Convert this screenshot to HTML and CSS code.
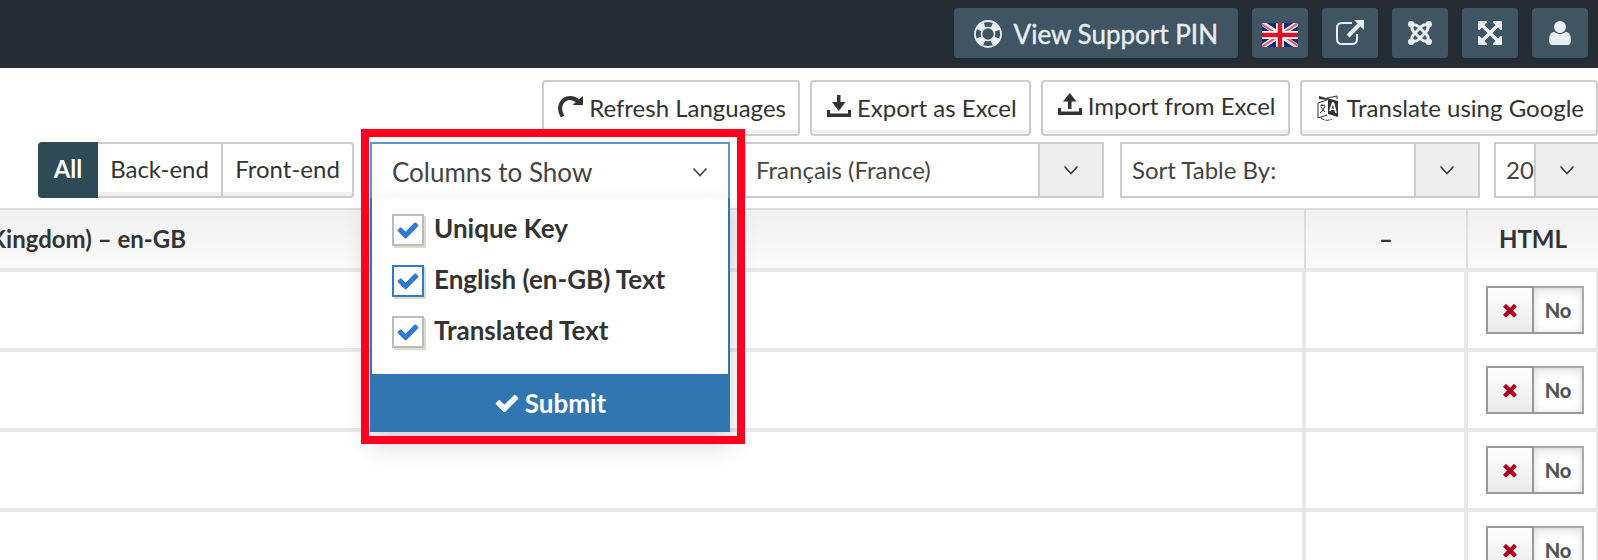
FILE: index.html
```html
<!DOCTYPE html>
<html lang="en">
<head>
<meta charset="utf-8">
<title>Language Manager</title>
<link rel="stylesheet" href="styles.css">
</head>
<body>
<svg class="sprite" aria-hidden="true">
  <symbol id="check" viewBox="0 0 1792 1792"><path d="M1671 566q0 40-28 68l-724 724-136 136q-28 28-68 28t-68-28l-136-136-362-362q-28-28-28-68t28-68l136-136q28-28 68-28t68 28l294 295 656-657q28-28 68-28t68 28l136 136q28 28 28 68z"/></symbol>
  <symbol id="times" viewBox="0 0 1792 1792"><path d="M1490 1322q0 40-28 68l-136 136q-28 28-68 28t-68-28l-294-294-294 294q-28 28-68 28t-68-28l-136-136q-28-28-28-68t28-68l294-294-294-294q-28-28-28-68t28-68l136-136q28-28 68-28t68 28l294 294 294-294q28-28 68-28t68 28l136 136q28 28 28 68t-28 68l-294 294 294 294q28 28 28 68z"/></symbol>
  <symbol id="chevron" viewBox="0 0 16 16"><path d="M1.500 4.500L8 11.500L14.500 4.500" fill="none" stroke="#444" stroke-width="1.800"/></symbol>
</svg>

<header class="topbar">
  <button class="top-btn top-btn-wide">
    <svg width="28" height="28" viewBox="0 0 28 28"><circle cx="14" cy="14" r="13" fill="none" stroke="currentColor" stroke-width="1.800"/><circle cx="14" cy="14" r="9.500" fill="none" stroke="currentColor" stroke-width="6" stroke-dasharray="7.500 7.423" stroke-dashoffset="-3.700"/><circle cx="14" cy="14" r="6.500" fill="none" stroke="currentColor" stroke-width="1.600"/></svg>
    <span>View Support PIN</span>
  </button>
  <button class="top-btn" aria-label="Language">
    <svg class="flag" width="36" height="24" viewBox="0 0 36 24"><path fill="#0b2a7b" d="M0 0h36v24H0z"/><path d="M0 0L36 24M36 0L0 24" stroke="#f3e6ee" stroke-width="5"/><path d="M0 1L16 12M36 0L20 11M0 24L16 13M36 23L20 12" stroke="#e0566a" stroke-width="2"/><path d="M18 0V24M0 12H36" stroke="#fff" stroke-width="8"/><path d="M18 0V24M0 12H36" stroke="#d8142c" stroke-width="4.600"/></svg>
  </button>
  <button class="top-btn" aria-label="Open site">
    <svg width="28" height="28" viewBox="0 0 28 28"><path d="M16 4H6Q1 4 1 9V20Q1 25 6 25H16Q21 25 21 20V15" fill="none" stroke="currentColor" stroke-width="2"/><path d="M12 17L23 6" stroke="currentColor" stroke-width="4"/><path d="M18 1h10v10z" fill="currentColor"/></svg>
  </button>
  <button class="top-btn" aria-label="Joomla">
    <svg width="24" height="24" viewBox="0 0 24 24" fill="none" stroke="currentColor" stroke-width="3"><g id="arm"><circle cx="3.200" cy="3.200" r="3.200" fill="currentColor" stroke="none"/><path d="M4 4.200Q8 3 11 6L17.500 12.500M4.200 4Q3 8 5.500 10.500L6.500 12"/></g><use href="#arm" transform="rotate(90 12 12)"/><use href="#arm" transform="rotate(180 12 12)"/><use href="#arm" transform="rotate(270 12 12)"/></svg>
  </button>
  <button class="top-btn" aria-label="Full screen">
    <svg width="24" height="24" viewBox="128 128 1536 1536" fill="currentColor"><path d="M1411 541l-355 355 355 355 144-144q29-31 70-14 39 17 39 59v448q0 26-19 45t-45 19h-448q-42 0-59-40-17-39 14-69l144-144-355-355-355 355 144 144q31 30 14 69-17 40-59 40h-448q-26 0-45-19t-19-45v-448q0-42 40-59 39-17 69 14l144 144 355-355-355-355-144 144q-19 19-45 19-12 0-24-5-40-17-40-59v-448q0-26 19-45t45-19h448q42 0 59 40 17 39-14 69l-144 144 355 355 355-355-144-144q-31-30-14-69 17-40 59-40h448q26 0 45 19t19 45v448q0 42-39 59-13 5-25 5-26 0-45-19z"/></svg>
  </button>
  <button class="top-btn" aria-label="Account">
    <svg width="24" height="24" viewBox="128 128 1536 1536" fill="currentColor"><path d="M1600 1399q0 109-62.500 187t-150.500 78h-982q-88 0-150.500-78t-62.500-187q0-85 8.500-160.500t31.500-152 58.500-131 94-89 134.500-34.500q195 128 377 128t377-128q76 0 134.500 34.500t94 89 58.500 131 31.500 152 8.500 160.500zm-320-887q0 159-112.500 271.500t-271.500 112.500-271.500-112.500-112.500-271.500 112.500-271.500 271.500-112.500 271.500 112.500 112.500 271.500z"/></svg>
  </button>
</header>

<main>
  <div class="actions">
    <button class="btn"><svg width="26" height="24" viewBox="0 0 26 24"><path d="M4.500 22.500C-1 13 4 4 12 4Q17 4 20 7.500" fill="none" stroke="currentColor" stroke-width="4"/><path d="M25 2V11H14.500Z" fill="currentColor"/></svg>Refresh Languages</button>
    <button class="btn"><svg width="26" height="24" viewBox="0 0 26 24" fill="currentColor"><path d="M11 1h3.500v7H19.500l-6.750 9L6 8H11zM1 16h3v3.500h18v-3.500h3v7H1z"/></svg>Export as Excel</button>
    <button class="btn btn-raised"><svg width="26" height="24" viewBox="0 0 26 24" fill="currentColor"><path d="M11 17V9.500H6l6.750-8.500L19.500 9.500h-5v7.500zM1 16h3v3.500h18v-3.500h3v7H1z"/></svg>Import from Excel</button>
    <button class="btn btn-translate"><svg width="22" height="26" viewBox="0 0 22 26" fill="none" stroke="currentColor"><path d="M10 3L20 1V4M10 5L1 8V23L10 20"/><path d="M2 1L21 6V22L11 19V5L2 4Z" fill="currentColor" stroke="none"/><path d="M3 11l5-1M5 9v2M8 11Q7 15 3 18M4 12l4 5" stroke-width="1"/><path d="M13 16l2.500-8h1l2.500 10M14 14l4 .5" stroke="#fff" stroke-width="1.700"/><path d="M4 23Q9 27 15 24" stroke-dasharray="4 1"/></svg>Translate using Google</button>
  </div>

  <div class="filters">
    <div class="group">
      <button class="seg seg-active">All</button><button class="seg">Back-end</button><button class="seg">Front-end</button>
    </div>
    <div class="columns">
      <div class="overlay">
        <button class="columns-toggle" aria-expanded="true"><span>Columns to Show</span><svg width="16" height="16"><use href="#chevron"/></svg></button>
        <form class="panel">
          <div class="options">
            <label class="option"><input type="checkbox" checked><svg width="24" height="24"><use href="#check"/></svg><span>Unique Key</span></label>
            <label class="option option-focus"><input type="checkbox" checked><svg width="24" height="24"><use href="#check"/></svg><span>English (en-GB) Text</span></label>
            <label class="option"><input type="checkbox" checked><svg width="24" height="24"><use href="#check"/></svg><span>Translated Text</span></label>
          </div>
          <button type="button" class="submit"><svg width="26" height="26"><use href="#check"/></svg>Submit</button>
        </form>
      </div>
    </div>
    <div class="select">
      <select aria-label="Language"><option>Français (France)</option></select>
      <span class="arrow"><svg width="16" height="16"><use href="#chevron"/></svg></span>
    </div>
    <div class="select select-sort">
      <select aria-label="Sort table"><option>Sort Table By:</option></select>
      <span class="arrow"><svg width="16" height="16"><use href="#chevron"/></svg></span>
    </div>
    <div class="select select-limit">
      <select aria-label="Rows per page"><option>20</option></select>
      <span class="arrow"><svg width="16" height="16"><use href="#chevron"/></svg></span>
    </div>
  </div>

  <table class="grid">
    <colgroup><col><col class="col-dash"><col class="col-html"></colgroup>
    <thead><tr><th class="source"><span>Kingdom) – en-GB</span></th><th>–</th><th>HTML</th></tr></thead>
    <tbody>
      <tr><td></td><td></td><td><button class="switch"><span class="knob"><svg width="20" height="20"><use href="#times"/></svg></span><span class="state">No</span></button></td></tr>
      <tr><td></td><td></td><td><button class="switch"><span class="knob"><svg width="20" height="20"><use href="#times"/></svg></span><span class="state">No</span></button></td></tr>
      <tr><td></td><td></td><td><button class="switch"><span class="knob"><svg width="20" height="20"><use href="#times"/></svg></span><span class="state">No</span></button></td></tr>
      <tr><td></td><td></td><td><button class="switch"><span class="knob"><svg width="20" height="20"><use href="#times"/></svg></span><span class="state">No</span></button></td></tr>
    </tbody>
  </table>
</main>
</body>
</html>
```
FILE: styles.css
```css
* { box-sizing: border-box; }
html { overflow: hidden; }
body {
  margin: 0;
  background: #fff;
  color: #333;
  font: 24px/32px Lato, "Liberation Sans", sans-serif;
}
button, select, input { font: inherit; color: inherit; margin: 0; }
button { padding: 0; border: 0; background: none; white-space: nowrap; }
svg { flex: none; }
.sprite { position: absolute; width: 0; height: 0; }

.topbar {
  display: flex;
  justify-content: flex-end;
  gap: 14px;
  padding: 8px 10px 10px;
  background: #252c34;
}
.top-btn {
  display: flex;
  align-items: center;
  justify-content: center;
  width: 56px;
  height: 50px;
  border-radius: 4px;
  background: #3f5563;
  color: #e8eef3;
}
.top-btn-wide {
  width: auto;
  gap: 12px;
  padding: 2px 20px 0;
  font-size: 26px;
  -webkit-text-stroke: 0.4px currentColor;
}
.flag { margin-top: 4px; }

.actions {
  display: flex;
  justify-content: flex-end;
  gap: 10px;
  padding: 12px 0 6px;
}
.btn {
  display: flex;
  align-items: center;
  gap: 5px;
  height: 56px;
  padding: 0 12px 0 14px;
  border: 2px solid #ccc;
  border-radius: 4px;
  background: #fff;
  box-shadow: inset 0 -4px #f0f0f0;
}
.btn svg { margin-bottom: 4px; }
.btn-raised { padding-bottom: 4px; }
.btn-translate { gap: 8px; padding-left: 15px; }
.btn-translate svg { margin: 0; }

.filters { display: flex; height: 56px; padding-left: 38px; }
.group { display: flex; flex: none; width: 316px; margin-right: 16px; }
.seg {
  flex: 1 1 auto;
  padding-bottom: 2px;
  border: solid #ccc;
  border-width: 2px 2px 2px 0;
  background: #fff;
  box-shadow: inset 0 -4px #f0f0f0;
}
.seg:last-child { border-radius: 0 4px 4px 0; }
.seg-active {
  flex: none;
  width: 60px;
  border: 0;
  border-radius: 4px 0 0 4px;
  background: #2e4a56;
  box-shadow: none;
  color: #fff;
  font-weight: 700;
}

.columns { position: relative; flex: none; width: 360px; margin-right: 14px; }
.overlay { position: absolute; z-index: 2; top: 0; left: 0; width: 100%; }
.overlay::after {
  content: "";
  position: absolute;
  inset: -13px -15px -12px -9px;
  border: 8px solid #ff0020;
  pointer-events: none;
}
.columns-toggle {
  display: flex;
  align-items: center;
  justify-content: space-between;
  width: 100%;
  height: 56px;
  padding: 2px 20px 0;
  border: 2px solid #5b97d0;
  border-bottom: 0;
  background: #fff;
  color: #444;
  font-size: 26px;
}
.panel {
  background: #fff;
  box-shadow: 0 12px 24px rgba(0, 0, 0, .18);
}
.options {
  display: flex;
  flex-direction: column;
  gap: 19px;
  padding: 16px 20px 26px;
  border: solid #3176b1;
  border-width: 0 2px;
}
.option { position: relative; display: flex; gap: 10px; font-size: 26px; line-height: 28px; font-weight: 700; }
.option input {
  appearance: none;
  width: 32px;
  height: 32px;
  border: 2px solid #bbb;
  background: #fff;
  box-shadow: 2px 2px #dcdccb;
}
.option-focus input { border-color: #2f7bd0; }
.option svg { position: absolute; top: 4px; left: 4px; fill: #2f7bd0; }
.submit {
  display: flex;
  align-items: center;
  justify-content: center;
  gap: 5px;
  width: 100%;
  height: 58px;
  background: #3176b1;
  color: #fff;
  font-size: 26px;
  font-weight: 700;
}
.submit svg { fill: currentColor; }

.select { position: relative; flex: none; width: 360px; margin-right: 16px; }
.select select {
  appearance: none;
  width: 100%;
  height: 56px;
  padding: 0 0 0 10px;
  border: 2px solid #ccc;
  border-radius: 0;
  background: #fff;
  color: #444;
}
.arrow {
  position: absolute;
  inset: 2px 2px 2px auto;
  display: flex;
  align-items: center;
  justify-content: center;
  width: 64px;
  border-left: 2px solid #ccc;
  background: #eee;
  pointer-events: none;
}
.select-sort { margin-right: 14px; }
.select-limit { flex: 1; margin: 0; }
.select-limit select { border-right: 0; }
.select-limit .arrow { right: 0; }

.grid {
  width: 100%;
  margin-top: 10px;
  border-collapse: separate;
  border-spacing: 0;
  table-layout: fixed;
}
.col-dash { width: 162px; }
.col-html { width: 130px; }
th {
  height: 64px;
  padding: 0;
  border-top: 2px solid #ddd;
  border-right: 2px solid #ddd;
  border-bottom: 4px solid #e8e8e8;
  background: linear-gradient(#f0f0f0, #fafafa);
}
th:last-child { border-right: 0; }
.source { overflow: hidden; }
.source span { display: flex; justify-content: flex-end; width: 186px; white-space: nowrap; }
td {
  height: 80px;
  padding: 0;
  border-right: 4px solid #e8e8e8;
  border-bottom: 4px solid #e8e8e8;
}
td:last-child { padding-left: 18px; border-right-width: 2px; }
.switch { display: flex; width: 98px; height: 48px; }
.knob {
  display: flex;
  align-items: center;
  justify-content: center;
  width: 48px;
  border: 2px solid #999;
  background: linear-gradient(#fff, #eaeaea);
}
.knob svg { fill: #ab0024; }
.state {
  width: 50px;
  border: solid #aaa;
  border-width: 2px 2px 2px 0;
  border-bottom-color: #999;
  box-shadow: inset 0 2px 8px rgba(0, 0, 0, .16);
  color: #555;
  font-size: 20px;
  line-height: 44px;
  font-weight: 900;
}
```
